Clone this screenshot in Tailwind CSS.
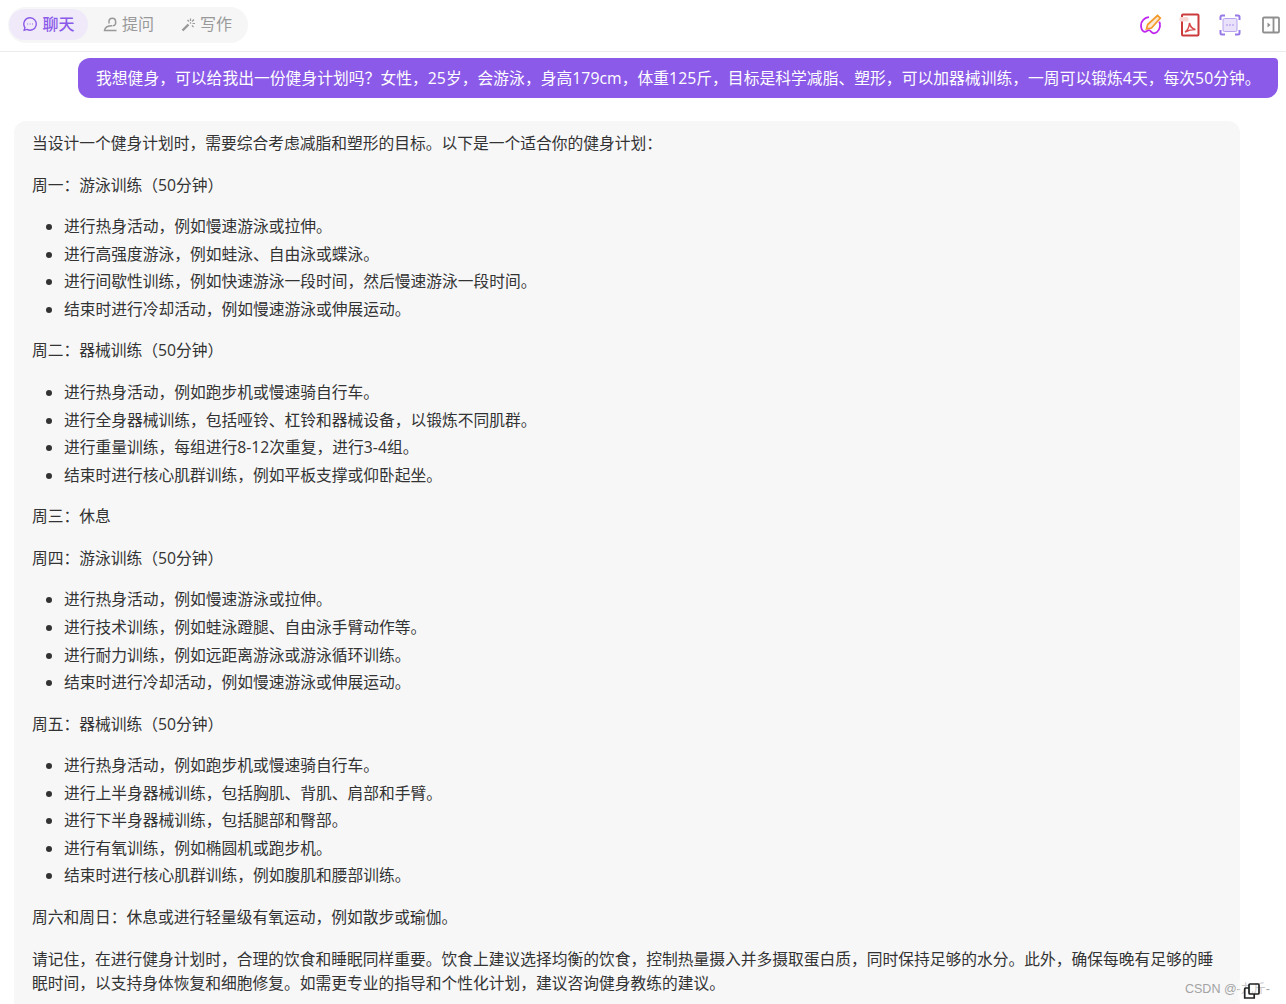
<!DOCTYPE html>
<html lang="zh">
<head>
<meta charset="utf-8">
<script src="https://cdn.jsdelivr.net/npm/@tailwindcss/browser@4"></script>
</head>
<body class="bg-white">
<div class="relative h-[1004px] w-[1286px] overflow-hidden bg-white font-['Open_Sans','Noto_Sans_CJK_SC','Liberation_Sans',sans-serif] text-[15.75px] leading-[24px] text-[#333333]">
  <header class="flex h-[52px] items-start justify-between border-b border-[#ececec] pl-[8px] pr-[5px] pt-[7px]">
    <nav class="flex h-[36px] w-[240px] items-start rounded-full bg-[#f6f6f6] pl-[1px] pt-[2px] text-[16px] leading-[30px]">
      <span class="flex h-[31px] w-[79px] items-center justify-center gap-[4px] rounded-full bg-[#efe9fa] pb-[2px] font-medium text-[#8c5ae8]">
        <svg class="mt-[1px] h-[16px] w-[16px]" viewBox="0 0 16 16" fill="none" stroke="#8c5ae8" stroke-width="1.400"><path d="M8 1.800a6.200 6.200 0 1 1-3 11.600l-2.800.8.7-2.700A6.200 6.200 0 0 1 8 1.800z"/><path d="M5.200 8h.9M7.600 8h.9M10 8h.9" stroke-width="1.100"/></svg>
        <span>聊天</span>
      </span>
      <span class="ml-[15px] flex h-[31px] items-center gap-[4px] pb-[2px] text-[#999999]">
        <svg class="mt-[2px] h-[15px] w-[15px]" viewBox="0 0 15 15" fill="none" stroke="#999999" stroke-width="1.500"><path d="M6 6.500V4.500a3.300 3.300 0 0 1 6.600 0v2.200a3 3 0 0 1-3 2"/><path d="M9 8.800c-4 0-7 1.400-7.500 4.700h12"/></svg>
        <span>提问</span>
      </span>
      <span class="ml-[27px] flex h-[31px] items-center gap-[4px] pb-[2px] text-[#999999]">
        <svg class="mt-[2px] h-[15px] w-[15px]" viewBox="0 0 15 15" fill="none" stroke="#999999" stroke-width="1.200"><path d="M1.500 13.500 7.500 7.500" stroke-width="2.400"/><path d="M9.500 1.500v2.500M13 2.500 11 4.500M14 6.500h-2.500M6.500 3l1.500 1.500M12.500 10 11 8.500M9 5.500l1 1"/></svg>
        <span>写作</span>
      </span>
    </nav>
    <div class="flex items-center pt-[6px]">
      <svg class="h-[24px] w-[24px]" viewBox="0 0 24 24" fill="none"><path d="M10 4.200C5.500 4.500 1.800 8 2 12.500c.1 2.500 1 5 2.700 6 2.200 1.200 3.400-1.300 5.300-1.300 2 0 2.500 3.800 5.700 3 3.300-.9 5.800-5 5.300-9-.1-1-.4-1.800-.8-2.600" stroke="#c026f0" stroke-width="1.800"/><path d="m7.500 16 1.200-4.500L18.500 2.500l2.800 2.500L12.500 15z" fill="#fde9d2" stroke="#f39a2b" stroke-width="1.700"/></svg>
      <svg class="ml-[16px] h-[24px] w-[21px]" viewBox="0 0 21 24" fill="none"><path d="M4 1.500h14.500a1 1 0 0 1 1 1v19a1 1 0 0 1-1 1H4a1 1 0 0 1-1-1v-19a1 1 0 0 1 1-1z" stroke="#cc3b3b" stroke-width="2"/><rect x="0.500" y="4" width="9" height="4.500" rx="1.500" fill="#f8d7d7"/><path d="M6 19c2-1 4-4.500 4.500-9 .8 4 2.500 6 6 6.500-3 0-7 .6-10.500 2.500z" stroke="#d84a4a" stroke-width="1.500"/></svg>
      <svg class="ml-[19px] h-[22px] w-[22px]" viewBox="0 0 22 22" fill="none"><path d="M1.500 6V3a1.500 1.500 0 0 1 1.500-1.500h3M16 1.500h3A1.500 1.500 0 0 1 20.500 3v3M20.500 16v3a1.500 1.500 0 0 1-1.500 1.500h-3M6 20.500H3A1.500 1.500 0 0 1 1.500 19v-3" stroke="#9678e6" stroke-width="2"/><rect x="4" y="4.500" width="14" height="13" rx="1.500" fill="#e9e2fa" stroke="#b7a3ee"/><path d="M7.500 11h1M10.500 11h1M13.500 11h1" stroke="#9678e6" stroke-width="1.500"/></svg>
      <svg class="ml-[20px] h-[20px] w-[20px]" viewBox="0 0 20 20" fill="none"><rect x="2" y="2.500" width="16" height="15" rx="1" stroke="#8f8f8f" stroke-width="1.800"/><path d="M12.500 2.500v15" stroke="#8f8f8f" stroke-width="1.800"/><path d="M6.500 7.500v5l3-2.500z" fill="#8f8f8f"/></svg>
    </div>
  </header>

  <main class="px-[8px] pt-[6px]">
    <div class="ml-[70px] w-[1200px] rounded-[12px] rounded-tr-[4px] bg-[#8c5ae8] py-[8px] pl-[18px] tracking-[0.05px] text-white">我想健身，可以给我出一份健身计划吗？女性，25岁，会游泳，身高179cm，体重125斤，目标是科学减脂、塑形，可以加器械训练，一周可以锻炼4天，每次50分钟。</div>

    <article class="ml-[6px] mt-[23px] h-[900px] w-[1226px] rounded-t-[12px] bg-[#f7f7f8] px-[18px] pt-[10px]">
      <p>当设计一个健身计划时，需要综合考虑减脂和塑形的目标。以下是一个适合你的健身计划：</p>
      <p class="mt-[17.600px]">周一：游泳训练（50分钟）</p>
      <ul class="mt-[17.600px] list-disc pl-[32px]">
        <li>进行热身活动，例如慢速游泳或拉伸。</li>
        <li class="mt-[3.550px]">进行高强度游泳，例如蛙泳、自由泳或蝶泳。</li>
        <li class="mt-[3.550px]">进行间歇性训练，例如快速游泳一段时间，然后慢速游泳一段时间。</li>
        <li class="mt-[3.550px]">结束时进行冷却活动，例如慢速游泳或伸展运动。</li>
      </ul>
      <p class="mt-[17.600px]">周二：器械训练（50分钟）</p>
      <ul class="mt-[17.600px] list-disc pl-[32px]">
        <li>进行热身活动，例如跑步机或慢速骑自行车。</li>
        <li class="mt-[3.550px]">进行全身器械训练，包括哑铃、杠铃和器械设备，以锻炼不同肌群。</li>
        <li class="mt-[3.550px]">进行重量训练，每组进行8-12次重复，进行3-4组。</li>
        <li class="mt-[3.550px]">结束时进行核心肌群训练，例如平板支撑或仰卧起坐。</li>
      </ul>
      <p class="mt-[17.600px]">周三：休息</p>
      <p class="mt-[17.600px]">周四：游泳训练（50分钟）</p>
      <ul class="mt-[17.600px] list-disc pl-[32px]">
        <li>进行热身活动，例如慢速游泳或拉伸。</li>
        <li class="mt-[3.550px]">进行技术训练，例如蛙泳蹬腿、自由泳手臂动作等。</li>
        <li class="mt-[3.550px]">进行耐力训练，例如远距离游泳或游泳循环训练。</li>
        <li class="mt-[3.550px]">结束时进行冷却活动，例如慢速游泳或伸展运动。</li>
      </ul>
      <p class="mt-[17.600px]">周五：器械训练（50分钟）</p>
      <ul class="mt-[17.600px] list-disc pl-[32px]">
        <li>进行热身活动，例如跑步机或慢速骑自行车。</li>
        <li class="mt-[3.550px]">进行上半身器械训练，包括胸肌、背肌、肩部和手臂。</li>
        <li class="mt-[3.550px]">进行下半身器械训练，包括腿部和臀部。</li>
        <li class="mt-[3.550px]">进行有氧训练，例如椭圆机或跑步机。</li>
        <li class="mt-[3.550px]">结束时进行核心肌群训练，例如腹肌和腰部训练。</li>
      </ul>
      <p class="mt-[17.600px]">周六和周日：休息或进行轻量级有氧运动，例如散步或瑜伽。</p>
      <p class="mt-[17.600px]">请记住，在进行健身计划时，合理的饮食和睡眠同样重要。饮食上建议选择均衡的饮食，控制热量摄入并多摄取蛋白质，同时保持足够的水分。此外，确保每晚有足够的睡眠时间，以支持身体恢复和细胞修复。如需更专业的指导和个性化计划，建议咨询健身教练的建议。</p>
    </article>
  </main>

  <span class="absolute left-[1185px] top-[981px] font-['Liberation_Sans','Noto_Sans_CJK_SC',sans-serif] text-[12.500px] leading-[16px] text-[#a3a3a3]">CSDN @-九斤-</span>
  <span class="absolute left-[1238px] top-[977px] flex h-[27px] w-[27px] items-center justify-center rounded-[6px] bg-white/40">
    <svg class="h-[18px] w-[18px]" viewBox="0 0 18 18" fill="none" stroke="#222222" stroke-width="1.700"><rect x="6" y="2" width="10" height="10" rx="1"/><path d="M6 6H2.500a.8.8 0 0 0-.8.8V16h9.500v-4"/></svg>
  </span>
</div>
</body>
</html>
